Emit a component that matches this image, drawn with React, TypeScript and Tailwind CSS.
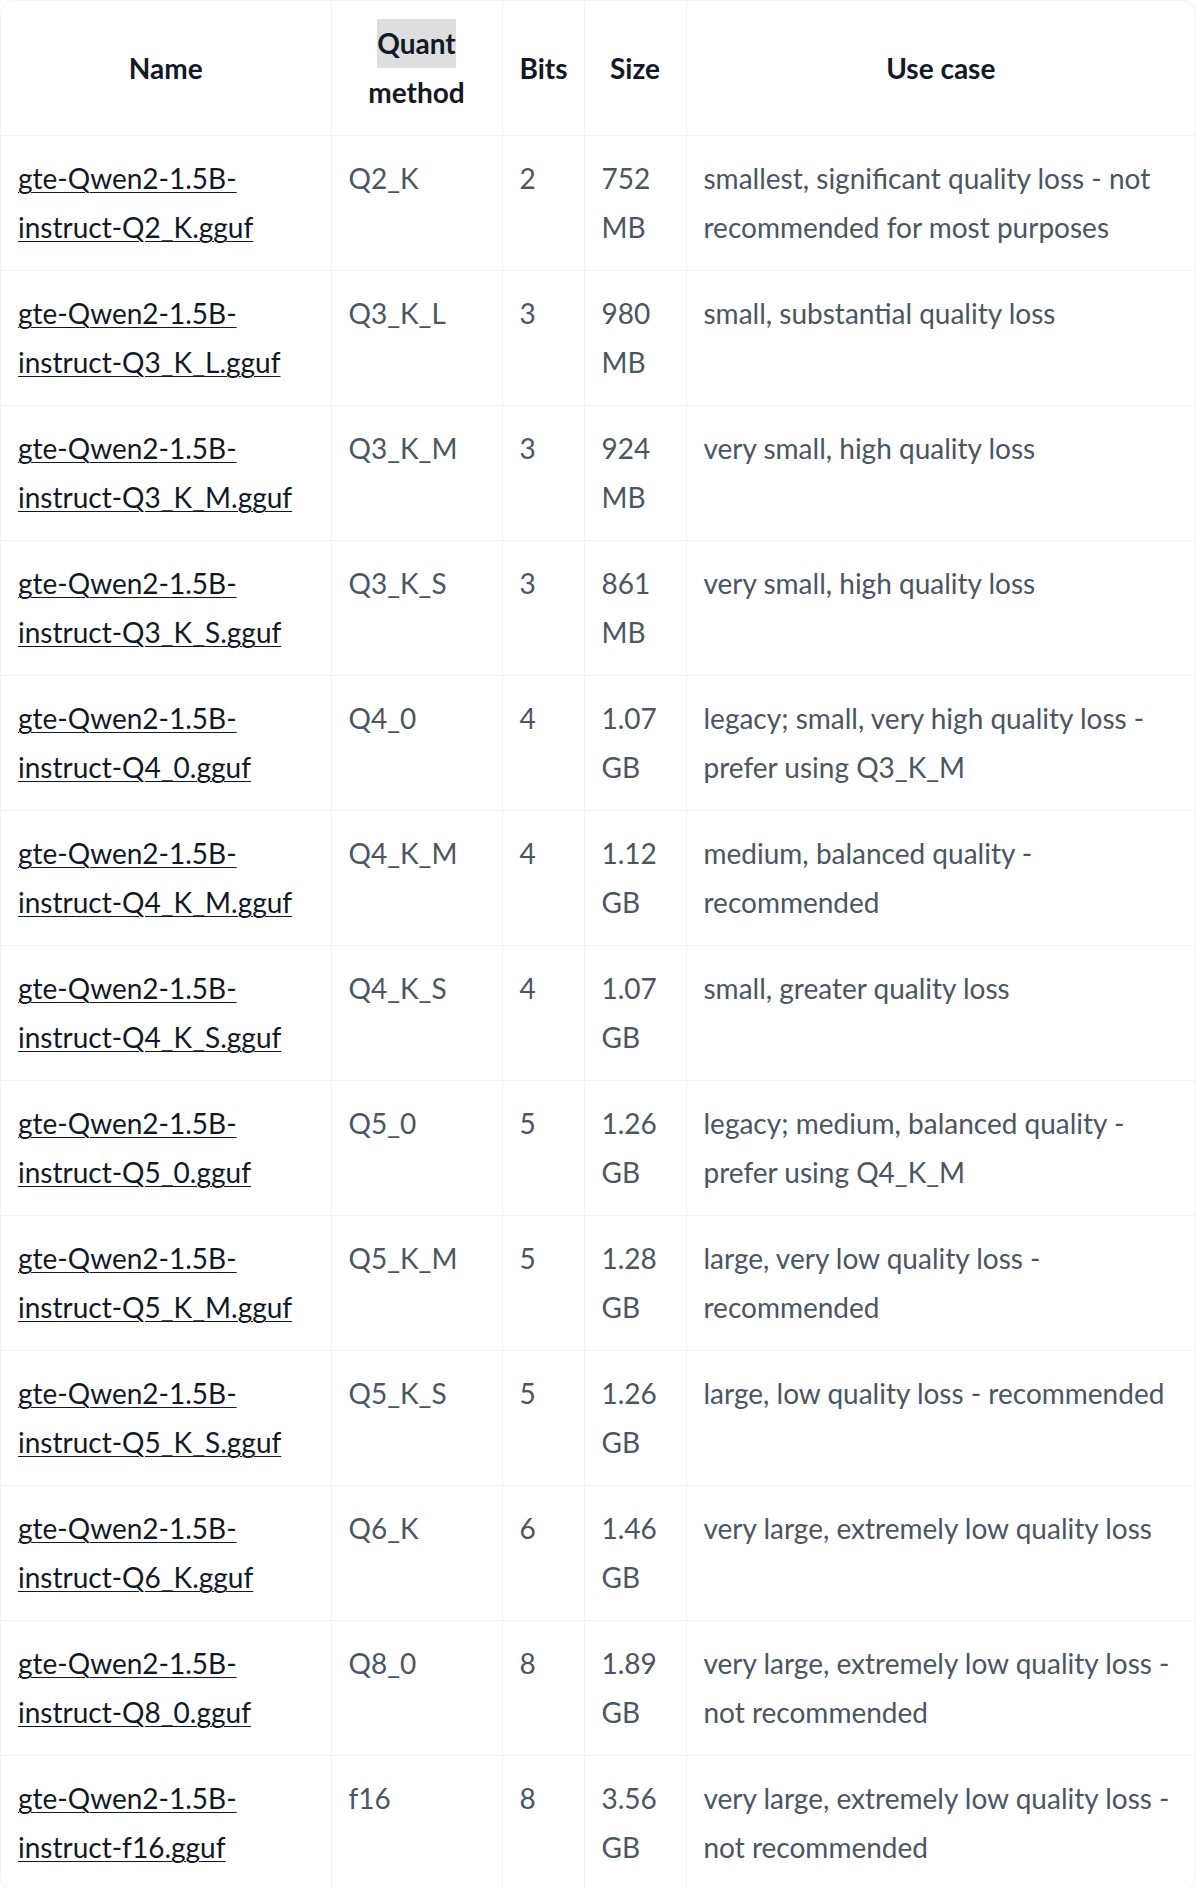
import React from 'react';

interface QuantRow {
  quant: string;
  bits: string;
  size: [string, string];
  use: string[];
}

const rows: QuantRow[] = [
  { quant: 'Q2_K', bits: '2', size: ['752', 'MB'], use: ['smallest, significant quality loss - not', 'recommended for most purposes'] },
  { quant: 'Q3_K_L', bits: '3', size: ['980', 'MB'], use: ['small, substantial quality loss'] },
  { quant: 'Q3_K_M', bits: '3', size: ['924', 'MB'], use: ['very small, high quality loss'] },
  { quant: 'Q3_K_S', bits: '3', size: ['861', 'MB'], use: ['very small, high quality loss'] },
  { quant: 'Q4_0', bits: '4', size: ['1.07', 'GB'], use: ['legacy; small, very high quality loss -', 'prefer using Q3_K_M'] },
  { quant: 'Q4_K_M', bits: '4', size: ['1.12', 'GB'], use: ['medium, balanced quality -', 'recommended'] },
  { quant: 'Q4_K_S', bits: '4', size: ['1.07', 'GB'], use: ['small, greater quality loss'] },
  { quant: 'Q5_0', bits: '5', size: ['1.26', 'GB'], use: ['legacy; medium, balanced quality -', 'prefer using Q4_K_M'] },
  { quant: 'Q5_K_M', bits: '5', size: ['1.28', 'GB'], use: ['large, very low quality loss -', 'recommended'] },
  { quant: 'Q5_K_S', bits: '5', size: ['1.26', 'GB'], use: ['large, low quality loss - recommended'] },
  { quant: 'Q6_K', bits: '6', size: ['1.46', 'GB'], use: ['very large, extremely low quality loss'] },
  { quant: 'Q8_0', bits: '8', size: ['1.89', 'GB'], use: ['very large, extremely low quality loss -', 'not recommended'] },
  { quant: 'f16', bits: '8', size: ['3.56', 'GB'], use: ['very large, extremely low quality loss -', 'not recommended'] },
];

const cell = 'border-b border-r border-[#f1f2f4] px-[17px] py-[18px] align-top';

export default function App() {
  return (
    <div className="w-[1196px] bg-white font-['Lato',sans-serif] text-[28px] leading-[49px]">
      <div className="overflow-hidden rounded-[14px] border border-[#f1f2f4]">
        <table className="w-full table-fixed border-collapse">
          <colgroup>
            <col className="w-[330px]" />
            <col className="w-[171px]" />
            <col className="w-[82px]" />
            <col className="w-[102px]" />
            <col />
          </colgroup>
          <thead>
            <tr className="text-[#111827] font-bold">
              <th className="border-b border-r border-[#f1f2f4] px-[17px] py-[18px] text-center align-middle">Name</th>
              <th className="border-b border-r border-[#f1f2f4] px-[17px] py-[18px] text-center align-middle">
                <span className="inline-block bg-[#dedede]">Quant</span>
                <br />
                method
              </th>
              <th className="border-b border-r border-[#f1f2f4] px-[17px] py-[18px] text-center align-middle">Bits</th>
              <th className="border-b border-r border-[#f1f2f4] px-[17px] py-[18px] text-center align-middle">Size</th>
              <th className="border-b border-[#f1f2f4] px-[17px] py-[18px] text-center align-middle">Use case</th>
            </tr>
          </thead>
          <tbody className="text-[#4b5563]">
            {rows.map((r, i) => {
              const last = i === rows.length - 1;
              const file = r.quant === 'f16' ? 'instruct-f16.gguf' : `instruct-${r.quant}.gguf`;
              return (
                <tr key={r.quant}>
                  <td className={last ? 'border-r border-[#f1f2f4] px-[17px] py-[18px] align-top' : cell}>
                    <a href="#" className="text-[#111827] underline underline-offset-[3px] decoration-1">
                      gte-Qwen2-1.5B-
                      <br />
                      {file}
                    </a>
                  </td>
                  <td className={last ? 'border-r border-[#f1f2f4] px-[17px] py-[18px] align-top' : cell}>{r.quant}</td>
                  <td className={last ? 'border-r border-[#f1f2f4] px-[17px] py-[18px] align-top' : cell}>{r.bits}</td>
                  <td className={last ? 'border-r border-[#f1f2f4] px-[17px] py-[18px] align-top' : cell}>
                    {r.size[0]}
                    <br />
                    {r.size[1]}
                  </td>
                  <td className={last ? 'px-[17px] py-[18px] align-top' : 'border-b border-[#f1f2f4] px-[17px] py-[18px] align-top'}>
                    {r.use.map((line, j) => (
                      <div key={j} className="whitespace-nowrap">
                        {line}
                      </div>
                    ))}
                  </td>
                </tr>
              );
            })}
          </tbody>
        </table>
      </div>
    </div>
  );
}
